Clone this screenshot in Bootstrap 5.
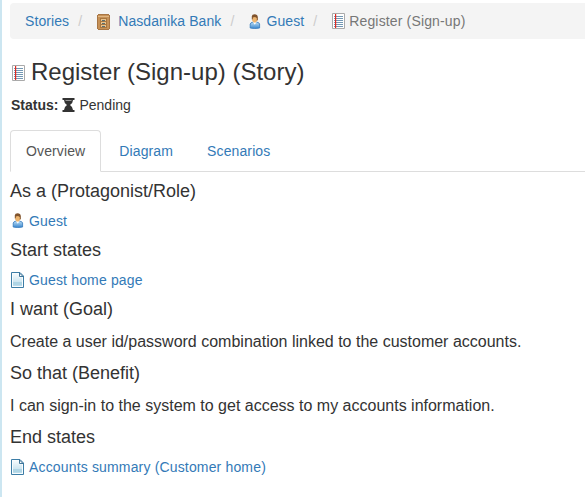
<!DOCTYPE html>
<html lang="en">
<head>
<meta charset="utf-8">
<meta name="viewport" content="width=device-width, initial-scale=1">
<title>Register (Sign-up)</title>
<link rel="stylesheet" href="https://cdn.jsdelivr.net/npm/bootstrap@5.3.0/dist/css/bootstrap.min.css">
<style>
body{font:14px/20px "Liberation Sans",Arial,sans-serif;color:#333;background:#fff;overflow:hidden}
a{color:#337ab7;text-decoration:none}
svg{display:block;flex:none}
.story-page{border-left:2px solid #cce6f1;padding:3px 0 0 8px;height:497px}
.story-page .breadcrumb{--bs-breadcrumb-font-size:14px;height:36px;padding:8px 15px;background:#f4f4f4;border-radius:4px 0 0 4px;letter-spacing:.09px}
.story-page .breadcrumb-item{display:flex;align-items:center;padding-left:0}
.breadcrumb-item a{display:flex;align-items:center}
.breadcrumb-item+.breadcrumb-item::before{content:"/";color:#ccc;width:20px;padding:0 0 0 9px}
.breadcrumb-item.active{color:#777;letter-spacing:.15px}
.story-title{font-size:24px;line-height:26px;font-weight:400;margin:20px 0 0;gap:6px}
.status-row{margin-top:10px;gap:4px;padding-left:1px}
.nav-tabs{margin-top:15px;--bs-nav-tabs-border-color:#ddd;--bs-nav-link-color:#337ab7;--bs-nav-tabs-link-active-color:#555;--bs-nav-tabs-link-active-border-color:#ddd #ddd #fff;--bs-nav-tabs-border-radius:4px}
.nav-tabs .nav-link{padding:10px 15px;line-height:20px;font-size:14px;margin-right:2px;letter-spacing:.12px}
h4{font-size:18px;line-height:20px;font-weight:400;margin:0;height:30px}
.state-link{height:29px;gap:5px;letter-spacing:.16px}
.story-sections{padding-top:9px}
.story-text{font-size:16px;line-height:22px;height:34px;margin:0;padding-top:2px}
</style>
<script src="https://cdn.jsdelivr.net/npm/bootstrap@5.3.0/dist/js/bootstrap.bundle.min.js"></script>
</head>
<body>
<svg width="0" height="0" class="position-absolute" aria-hidden="true">
<defs>
<linearGradient id="blueFill" x2="0" y2="1"><stop stop-color="#b9ddf5"/><stop offset="1" stop-color="#3b87ce"/></linearGradient>
<linearGradient id="paperFill" x2="0" y2="1"><stop stop-color="#f4fafd"/><stop offset="1" stop-color="#b9dbea"/></linearGradient>
<symbol id="person" viewBox="0 0 12 15"><path d="M1.200 14V10Q1.500 8.500 3.800 8.200h4Q10.400 8.500 10.600 10v4q-5 1-9.400 0" fill="url(#blueFill)" stroke="#3478bd" stroke-width=".8"/><path d="M4 8h3.600L5.800 10.800z" fill="#fff"/><path d="M3.200 3h5v3.400L6.800 8.400H4.600L3.200 6.400z" fill="#edb56f"/><path d="M2.800 5.500V2.300Q3 .3 5.600.3 8.500.3 8.800 3v3L7.800 6.800V4L6 3 3.800 3.600v1.600z" fill="#80532c"/></symbol>
<symbol id="sheet" viewBox="0 0 13 16"><path d="M.5.5h12v15H.5z" fill="#fff" stroke="#aaa"/><path d="M2 3h9v1H2zM2 5h9v1H2zM2 7h9v1H2zM2 9h9v1H2zM2 11h9v1H2zM2 13h9v1H2z" fill="#7398b4"/><path d="M3 1h1.200v14H3z" fill="#e02a22"/></symbol>
<symbol id="page" viewBox="0 0 13 16"><path d="M.5.5h8.500l3.500 3.500v11.500H.5z" fill="#f8fcfe" stroke="#3c7da6"/><path d="M2 2h6v3.500h3V14H2z" fill="url(#paperFill)"/><path d="M8.500 1v3.500H12z" fill="#fff" stroke="#2b678f" stroke-width=".9"/><path d="M2 10h9v3H2z" fill="#afd5e5"/></symbol>
</defs>
</svg>
<main class="story-page">
<nav aria-label="breadcrumb">
<ol class="breadcrumb mb-0 flex-nowrap text-nowrap">
<li class="breadcrumb-item"><a href="#">Stories</a></li>
<li class="breadcrumb-item"><a href="#"><svg width="13" height="16" viewBox="0 0 13 16" style="margin:1px 8px 0 8px"><path d="M1 0h11v1h1v14h-1v1H1v-1H0V1h1z" fill="#a87543"/><path d="M1 1h11v14H1z" fill="#c69157"/><path d="M1 2h11v1H1z" fill="#e0b580"/><path d="M3 4h7v10H3z" fill="#a8763f"/><path d="M4 5h5v2H4zM4 8h5v2H4zM4 11h5v2H4z" fill="#e8c28c"/><path d="M5 6h3v1H5zM5 9h3v1H5zM5 12h3v1H5z" fill="#5b6e70"/></svg>Nasdanika Bank</a></li>
<li class="breadcrumb-item"><a href="#"><svg width="12" height="15" style="margin:0 5px 0 8px"><use href="#person"/></svg>Guest</a></li>
<li class="breadcrumb-item active" aria-current="page"><svg width="13" height="16" style="margin:0 4px 0 8px"><use href="#sheet"/></svg>Register (Sign-up)</li>
</ol>
</nav>
<h3 class="story-title d-flex align-items-center"><svg width="13" height="16" style="margin:2px 0 0 2px"><use href="#sheet"/></svg>Register (Sign-up) (Story)</h3>
<div class="status-row d-flex align-items-center"><strong>Status:</strong><svg width="13" height="14" viewBox="0 0 13 14"><path d="M.5 0h12v2H11q0 3-3 5 3 2 3 5h1.500v2H.5v-2H2q0-3 3-5-3-2-3-5H.5z" fill="#333"/><path d="M3.500 2.500h6" stroke="#999"/></svg><span>Pending</span></div>
<ul class="nav nav-tabs">
<li class="nav-item"><a class="nav-link active" href="#">Overview</a></li>
<li class="nav-item"><a class="nav-link" href="#">Diagram</a></li>
<li class="nav-item"><a class="nav-link" href="#">Scenarios</a></li>
</ul>
<section class="story-sections">
<h4>As a (Protagonist/Role)</h4>
<div class="state-link d-flex align-items-start"><svg width="12" height="15" style="margin:2px 0 0 2px"><use href="#person"/></svg><a href="#">Guest</a></div>
<h4>Start states</h4>
<div class="state-link d-flex align-items-start"><svg width="13" height="16" style="margin:2px 0 0 1px"><use href="#page"/></svg><a href="#">Guest home page</a></div>
<h4>I want (Goal)</h4>
<p class="story-text">Create a user id/password combination linked to the customer accounts.</p>
<h4>So that (Benefit)</h4>
<p class="story-text">I can sign-in to the system to get access to my accounts information.</p>
<h4>End states</h4>
<div class="state-link d-flex align-items-start"><svg width="13" height="16" style="margin:2px 0 0 1px"><use href="#page"/></svg><a href="#">Accounts summary (Customer home)</a></div>
</section>
</main>
</body>
</html>
